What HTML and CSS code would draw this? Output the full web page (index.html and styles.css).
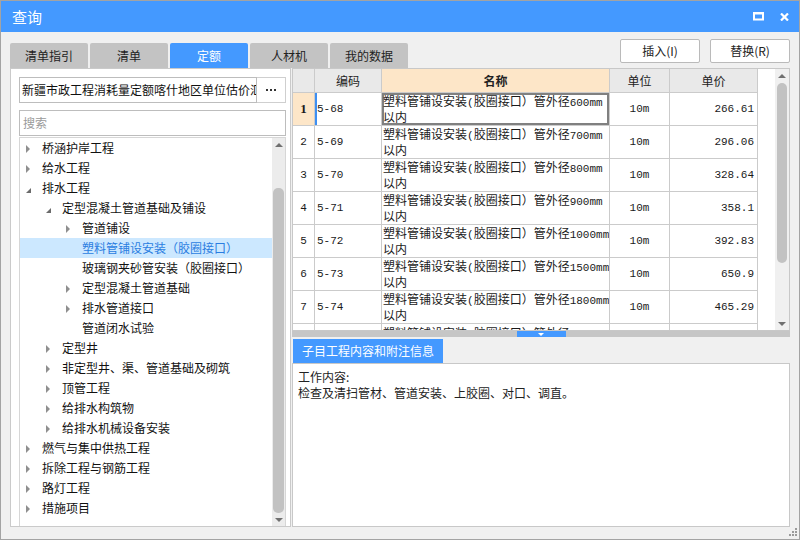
FILE: index.html
```html
<!DOCTYPE html>
<html lang="zh">
<head>
<meta charset="utf-8">
<title>查询</title>
<link rel="stylesheet" href="styles.css">
</head>
<body>
<div class="window">
  <div class="titlebar">
    <span class="title">查询</span>
    <div class="wctl">
      <svg width="11" height="9" viewBox="0 0 11 9"><rect x="1" y="1.5" width="9" height="6" fill="none" stroke="#fff" stroke-width="2"/><rect x="0" y="0" width="11" height="2" fill="#fff"/></svg>
      <svg width="9" height="8" viewBox="0 0 9 8"><path d="M1 0.5L8 7.5M8 0.5L1 7.5" stroke="#fff" stroke-width="2.2"/></svg>
    </div>
  </div>
  <div class="body">
    <div class="toprow">
      <div class="tabs">
        <div class="tab">清单指引</div>
        <div class="tab">清单</div>
        <div class="tab active">定额</div>
        <div class="tab">人材机</div>
        <div class="tab">我的数据</div>
      </div>
      <div class="actions">
        <button class="btn">插入(I)</button>
        <button class="btn">替换(R)</button>
      </div>
    </div>
    <div class="main">
      <div class="left">
        <div class="pathrow">
          <div class="path">新疆市政工程消耗量定额喀什地区单位估价汇总表</div>
          <div class="more"><svg width="10" height="2" viewBox="0 0 10 2"><rect x="0" y="0" width="2" height="2" fill="#333"/><rect x="4" y="0" width="2" height="2" fill="#333"/><rect x="8" y="0" width="2" height="2" fill="#333"/></svg></div>
        </div>
        <div class="search">搜索</div>
        <div class="tree">
          <div class="tree-list">
            <div class="node l0"><span class="tw"><i class="tri-r"></i></span>桥涵护岸工程</div>
            <div class="node l0"><span class="tw"><i class="tri-r"></i></span>给水工程</div>
            <div class="node l0"><span class="tw"><i class="tri-d"></i></span>排水工程</div>
            <div class="node l1"><span class="tw"><i class="tri-d"></i></span>定型混凝土管道基础及铺设</div>
            <div class="node l2"><span class="tw"><i class="tri-r"></i></span>管道铺设</div>
            <div class="node l2 sel"><span class="tw"></span>塑料管铺设安装（胶圈接口）</div>
            <div class="node l2"><span class="tw"></span>玻璃钢夹砂管安装（胶圈接口）</div>
            <div class="node l2"><span class="tw"><i class="tri-r"></i></span>定型混凝土管道基础</div>
            <div class="node l2"><span class="tw"><i class="tri-r"></i></span>排水管道接口</div>
            <div class="node l2"><span class="tw"></span>管道闭水试验</div>
            <div class="node l1"><span class="tw"><i class="tri-r"></i></span>定型井</div>
            <div class="node l1"><span class="tw"><i class="tri-r"></i></span>非定型井、渠、管道基础及砌筑</div>
            <div class="node l1"><span class="tw"><i class="tri-r"></i></span>顶管工程</div>
            <div class="node l1"><span class="tw"><i class="tri-r"></i></span>给排水构筑物</div>
            <div class="node l1"><span class="tw"><i class="tri-r"></i></span>给排水机械设备安装</div>
            <div class="node l0"><span class="tw"><i class="tri-r"></i></span>燃气与集中供热工程</div>
            <div class="node l0"><span class="tw"><i class="tri-r"></i></span>拆除工程与钢筋工程</div>
            <div class="node l0"><span class="tw"><i class="tri-r"></i></span>路灯工程</div>
            <div class="node l0"><span class="tw"><i class="tri-r"></i></span>措施项目</div>
          </div>
          <div class="vs tree-vs">
            <div class="arrow"><i class="ar-up"></i></div>
            <div class="track"><div class="thumb"></div></div>
            <div class="arrow"><i class="ar-down"></i></div>
          </div>
        </div>
      </div>
      <div class="right">
        <div class="grid">
          <div class="gridview">
            <div class="r head">
              <div class="c num"></div>
              <div class="c code h">编码</div>
              <div class="c name h active">名称</div>
              <div class="c unit h">单位</div>
              <div class="c price h">单价</div>
            </div>
            <div class="r cur">
              <div class="c num">1</div>
              <div class="c code">5-68</div>
              <div class="c name"><span>塑料管铺设安装<span class="n">(</span>胶圈接口）管外径<span class="n">600mm</span><br>以内</span></div>
              <div class="c unit">10m</div>
              <div class="c price">266.61</div>
            </div>
            <div class="r">
              <div class="c num">2</div>
              <div class="c code">5-69</div>
              <div class="c name"><span>塑料管铺设安装<span class="n">(</span>胶圈接口）管外径<span class="n">700mm</span><br>以内</span></div>
              <div class="c unit">10m</div>
              <div class="c price">296.06</div>
            </div>
            <div class="r">
              <div class="c num">3</div>
              <div class="c code">5-70</div>
              <div class="c name"><span>塑料管铺设安装<span class="n">(</span>胶圈接口）管外径<span class="n">800mm</span><br>以内</span></div>
              <div class="c unit">10m</div>
              <div class="c price">328.64</div>
            </div>
            <div class="r">
              <div class="c num">4</div>
              <div class="c code">5-71</div>
              <div class="c name"><span>塑料管铺设安装<span class="n">(</span>胶圈接口）管外径<span class="n">900mm</span><br>以内</span></div>
              <div class="c unit">10m</div>
              <div class="c price">358.1</div>
            </div>
            <div class="r">
              <div class="c num">5</div>
              <div class="c code">5-72</div>
              <div class="c name"><span>塑料管铺设安装<span class="n">(</span>胶圈接口）管外径<span class="n">1000mm</span><br>以内</span></div>
              <div class="c unit">10m</div>
              <div class="c price">392.83</div>
            </div>
            <div class="r">
              <div class="c num">6</div>
              <div class="c code">5-73</div>
              <div class="c name"><span>塑料管铺设安装<span class="n">(</span>胶圈接口）管外径<span class="n">1500mm</span><br>以内</span></div>
              <div class="c unit">10m</div>
              <div class="c price">650.9</div>
            </div>
            <div class="r">
              <div class="c num">7</div>
              <div class="c code">5-74</div>
              <div class="c name"><span>塑料管铺设安装<span class="n">(</span>胶圈接口）管外径<span class="n">1800mm</span><br>以内</span></div>
              <div class="c unit">10m</div>
              <div class="c price">465.29</div>
            </div>
            <div class="r">
              <div class="c num"></div>
              <div class="c code"></div>
              <div class="c name partial"><span>塑料管铺设安装<span class="n">(</span>胶圈接口）管外径<span class="n">2000mm</span></span></div>
              <div class="c unit"></div>
              <div class="c price"></div>
            </div>
          </div>
          <div class="vs grid-vs">
            <div class="arrow"><i class="ar-up"></i></div>
            <div class="track"><div class="thumb"></div></div>
            <div class="arrow"><i class="ar-down"></i></div>
          </div>
        </div>
        <div class="splitter"><div class="handle"><i class="ar-down-w"></i></div></div>
        <div class="infotab">子目工程内容和附注信息</div>
        <div class="infobox">
          <div>工作内容:</div>
          <div>检查及清扫管材、管道安装、上胶圈、对口、调直。</div>
        </div>
      </div>
    </div>
  </div>
  <svg class="grip" width="9" height="9" viewBox="0 0 9 9"><rect x="7" y="1" width="2" height="2" fill="#9a9a9a"/><rect x="4" y="4" width="2" height="2" fill="#9a9a9a"/><rect x="7" y="4" width="2" height="2" fill="#9a9a9a"/><rect x="1" y="7" width="2" height="2" fill="#9a9a9a"/><rect x="4" y="7" width="2" height="2" fill="#9a9a9a"/><rect x="7" y="7" width="2" height="2" fill="#9a9a9a"/></svg>
</div>
</body>
</html>
```

FILE: styles.css
```css
* { box-sizing: border-box; }
body {
  margin: 0;
  font-family: "Noto Sans CJK SC", "Microsoft YaHei", sans-serif;
  font-size: 12px;
  color: #1a1a1a;
}
.window {
  width: 800px;
  height: 540px;
  border: 1px solid #a3a3a3;
  background: #f0f0f0;
  display: flex;
  flex-direction: column;
  position: relative;
}
.titlebar {
  height: 31px;
  flex: none;
  background: #4499ff;
  display: flex;
  align-items: center;
  justify-content: space-between;
  padding: 0 10px 0 11px;
  color: #fff;
}
.title { font-size: 15px; line-height: 20px; }
.wctl { display: flex; align-items: center; gap: 16px; }
.wctl svg { display: block; }

.body {
  flex: 1;
  display: flex;
  flex-direction: column;
  padding: 0 9px 12px 9px;
  min-height: 0;
}
.toprow {
  height: 36px;
  flex: none;
  display: flex;
  justify-content: space-between;
}
.tabs { display: flex; gap: 2px; align-self: flex-end; }
.tab {
  width: 78px;
  height: 25px;
  background: #c3c3c3;
  color: #222;
  display: flex;
  align-items: center;
  justify-content: center;
  border-radius: 2px 2px 0 0;
  line-height: 16px;
}
.tab.active { background: #4499ff; color: #fff; }
.actions { display: flex; gap: 10px; padding-top: 7px; align-items: flex-start; }
.btn {
  width: 80px;
  height: 24px;
  background: #fff;
  border: 1px solid #bababa;
  border-radius: 2px;
  font: inherit;
  color: #222;
  padding: 0;
  line-height: 20px;
}

.main { flex: 1; display: flex; gap: 1px; min-height: 0; }

.left {
  width: 281px;
  flex: none;
  border: 1px solid #cacaca;
  background: #fff;
  padding: 8px 4px 0 8px;
  display: flex;
  flex-direction: column;
}
.pathrow { display: flex; height: 26px; flex: none; }
.path {
  flex: 1;
  min-width: 0;
  border: 1px solid #bdbdbd;
  padding: 0 2px;
  line-height: 24px;
  white-space: nowrap;
  overflow: hidden;
  color: #111;
}
.more {
  width: 29px;
  flex: none;
  border: 1px solid #cfcfcf;
  border-left: none;
  display: flex;
  align-items: center;
  justify-content: center;
}
.more svg { display: block; }
.search {
  margin-top: 7px;
  height: 26px;
  flex: none;
  border: 1px solid #bdbdbd;
  color: #9a9a9a;
  padding: 0 3px;
  line-height: 24px;
}
.tree {
  margin-top: 1px;
  flex: 1;
  min-height: 0;
  display: flex;
  border: 1px solid #d6d6d6;
  border-bottom: none;
}
.tree-list { flex: 1; overflow: hidden; min-width: 0; }
.node {
  height: 20px;
  display: flex;
  align-items: center;
  white-space: nowrap;
  color: #111;
  line-height: 16px;
}
.node.l0 { padding-left: 6px; }
.node.l1 { padding-left: 26px; }
.node.l2 { padding-left: 46px; }
.node.sel { background: #cce8ff; color: #2a7de1; }
.tw { width: 16px; flex: none; display: flex; align-items: center; height: 20px; }
.tri-r {
  display: block;
  width: 0; height: 0;
  border-left: 4px solid #8f8f8f;
  border-top: 4px solid transparent;
  border-bottom: 4px solid transparent;
  margin-top: 1px;
}
.tri-d {
  display: block;
  width: 0; height: 0;
  border-left: 5px solid transparent;
  border-bottom: 5px solid #6b6b6b;
  margin-top: 5px;
}

.vs { flex: none; display: flex; flex-direction: column; background: #ececec; }
.vs .arrow { height: 14px; flex: none; display: flex; align-items: center; justify-content: center; }
.vs .track { flex: 1; display: flex; flex-direction: column; }
.vs .thumb { background: #c2c2c2; border-radius: 5px; margin: 0 2px; }
.ar-up {
  display: block; width: 0; height: 0;
  border-left: 4px solid transparent;
  border-right: 4px solid transparent;
  border-bottom: 4px solid #707070;
}
.ar-down {
  display: block; width: 0; height: 0;
  border-left: 4px solid transparent;
  border-right: 4px solid transparent;
  border-top: 4px solid #707070;
}
.tree-vs { width: 13px; }
.tree-vs .track { padding-top: 36px; padding-bottom: 1px; }
.tree-vs .thumb { flex: 1; margin: 0 1px; }
.tree-vs .arrow:last-child { height: 12px; }

.right { flex: 1; display: flex; flex-direction: column; min-width: 0; }
.grid {
  height: 263px;
  flex: none;
  border: 1px solid #c8c8c8;
  background: #fff;
  display: flex;
}
.gridview { flex: 1; overflow: hidden; min-width: 0; }
.r {
  display: flex;
  height: 33px;
  width: 465px;
  border-bottom: 1px solid #cbcbcb;
}
.r.head { height: 24px; }
.c {
  border-right: 1px solid #cbcbcb;
  display: flex;
  align-items: center;
  flex: none;
  overflow: hidden;
  white-space: nowrap;
}
.c.num {
  width: 22px;
  justify-content: center;
  font-family: "Liberation Mono", monospace;
  font-size: 11px;
}
.c.code {
  width: 67px;
  padding-left: 2px;
  font-family: "Liberation Mono", monospace;
  font-size: 11px;
}
.c.name { width: 228px; padding-left: 1px; line-height: 14px; }
.c.name.partial { align-items: flex-start; padding-top: 2px; }
.c.unit {
  width: 60px;
  justify-content: center;
  font-family: "Liberation Mono", monospace;
  font-size: 11px;
}
.c.price {
  width: 88px;
  justify-content: flex-end;
  padding-right: 3px;
  font-family: "Liberation Mono", monospace;
  font-size: 11px;
}
.n { font-family: "Liberation Mono", monospace; font-size: 11px; }
.head .c { background: #e9e9e9; }
.head .h {
  justify-content: center;
  padding: 0;
  font-family: "Noto Sans CJK SC", "Microsoft YaHei", sans-serif;
  font-size: 12px;
  color: #222;
}
.head .h.active { background: #fde6c8; font-weight: bold; }
.cur .num {
  background: #fde6c8;
  font-family: "Liberation Serif", serif;
  font-weight: bold;
  font-size: 13px;
}
.cur .code { box-shadow: inset 2px 0 0 #3d8ff2; }
.cur .name { box-shadow: inset 0 0 0 2px #808080; }

.grid-vs { width: 14px; background: #f0f0f0; }
.grid-vs .track { padding-bottom: 54px; }
.grid-vs .thumb { flex: 1; }
.grid-vs .arrow:last-child { height: 13px; }

.splitter {
  height: 6px;
  flex: none;
  background: #c6c6c6;
  display: flex;
  justify-content: center;
}
.handle {
  width: 49px;
  background: #4499ff;
  display: flex;
  align-items: center;
  justify-content: center;
}
.ar-down-w {
  display: block; width: 0; height: 0;
  border-left: 3px solid transparent;
  border-right: 3px solid transparent;
  border-top: 3px solid #fff;
}
.infotab {
  margin-top: 2px;
  margin-left: 1px;
  width: 150px;
  height: 24px;
  flex: none;
  background: #4499ff;
  color: #fff;
  display: flex;
  align-items: center;
  justify-content: center;
  line-height: 16px;
}
.infobox {
  flex: 1;
  background: #fff;
  border: 1px solid #c8c8c8;
  padding: 5px 5px;
  line-height: 16px;
  color: #222;
}
.grip { position: absolute; right: 2px; bottom: 3px; display: block; }
```
